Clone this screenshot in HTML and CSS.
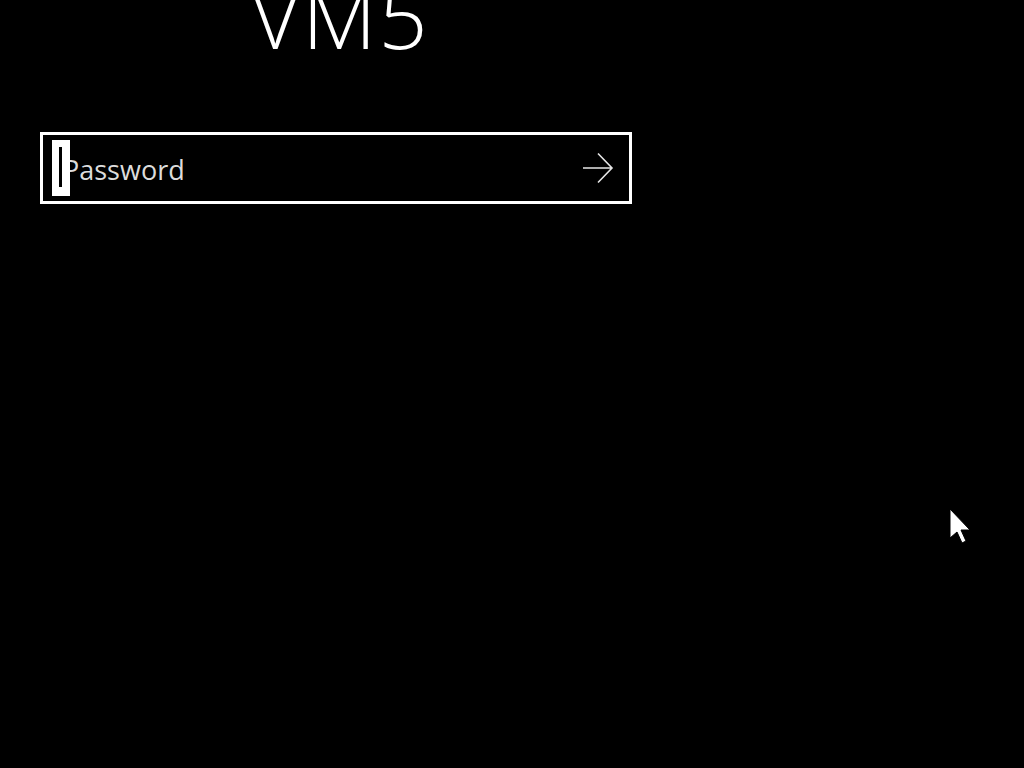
FILE: index.html
```html
<!DOCTYPE html>
<html>
<head>
<meta charset="utf-8">
<link rel="stylesheet" href="styles.css">
</head>
<body>
<main class="screen">
  <h1 class="title">VM5</h1>
  <div class="field">
    <span class="caret"><span class="caret-line"></span></span>
    <span class="placeholder">Password</span>
    <svg class="submit" width="32" height="32" viewBox="0 0 32 32">
      <path d="M1 16 H30 M16 1.5 L30 16 L16 30.5" fill="none" stroke="#e6e6e6" stroke-width="1.6"/>
    </svg>
  </div>
</main>
<svg class="pointer" width="24" height="36" viewBox="0 0 24 36">
  <path d="M1 1 L1 30 L8 24 L13 35 L17 33 L12 22 L21 22 Z" fill="#fff" stroke="#000" stroke-width="1"/>
</svg>
</body>
</html>
```
FILE: styles.css
```css
html, body {
  margin: 0;
  height: 100%;
  background: #000;
}
body {
  overflow: hidden;
}
.screen {
  padding-left: 40px;
  display: flex;
  flex-direction: column;
}
.title {
  width: 592px;
  margin: -44px 0 0 0;
  text-align: center;
  font-family: "Open Sans", sans-serif;
  font-weight: 300;
  font-size: 86px;
  line-height: 120px;
  color: #fff;
  letter-spacing: 2px;
  height: 176px;
  padding-left: 8px;
  box-sizing: border-box;
}
.field {
  position: relative;
  width: 592px;
  height: 72px;
  box-sizing: border-box;
  border: 3px solid #fff;
  display: flex;
  align-items: center;
  padding-left: 20px;
  padding-right: 15px;
}
.placeholder {
  flex: 1;
  font-family: "Open Sans", sans-serif;
  font-size: 27px;
  color: #dcdcdc;
  letter-spacing: 0;
  margin-top: 3px;
}
.caret {
  position: absolute;
  left: 9px;
  top: 5px;
  width: 18px;
  height: 56px;
  background: #fff;
}
.caret-line {
  position: absolute;
  left: 7px;
  top: 7px;
  width: 3px;
  height: 40px;
  background: #000;
}
.submit {
  display: block;
}
.pointer {
  position: absolute;
  left: 949px;
  top: 508px;
}
```
